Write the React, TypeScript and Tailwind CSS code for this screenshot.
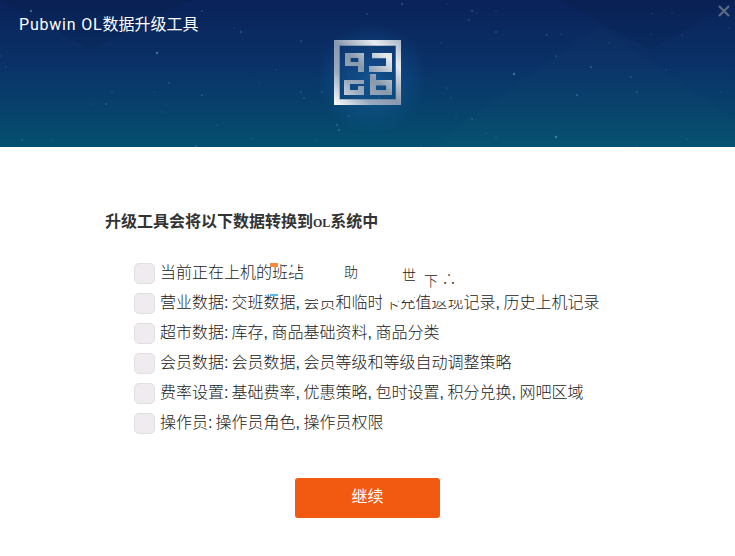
const rows = [
  ['当前正在上机的班结'],
  ['营业数据', '交班数据, 会员和临时卡充值返现记录, 历史上机记录'],
  ['超市数据', '库存, 商品基础资料, 商品分类'],
  ['会员数据', '会员数据, 会员等级和等级自动调整策略'],
  ['费率设置', '基础费率, 优惠策略, 包时设置, 积分兑换, 网吧区域'],
  ['操作员', '操作员角色, 操作员权限'],
];

// white patches and stray bits of text where the first two rows are broken up
const patches = [
  'left-[303px] top-[35px] w-[15px] h-[6px]',
  'left-[318px] top-[35px] w-[16px] h-[8px]',
  'left-[382px] top-[35px] w-[16px] h-[9px]',
  'left-[398px] top-[35px] w-[16px] h-[7px]',
  'left-[430px] top-[35px] w-[16px] h-[8px]',
  'left-[446px] top-[35px] w-[16px] h-[7px]',
  'left-[282px] top-[9px] w-[16px] h-[5px]',
];
const fragments = [
  { text: '助', cls: 'left-[344px] top-[5px]' },
  { text: '世', cls: 'left-[402px] top-[8px]' },
  { text: '下', cls: 'left-[424px] top-[14px]' },
  { text: '∴', cls: 'left-[442px] top-[12px]' },
];

// fixed pseudo random star field
const stars = Array.from({ length: 70 }, (_, i) => ({
  x: (i * i * 37 + i * 191 + 31) % 735,
  y: (i * i * 13 + i * 59 + 11) % 147,
  r: i % 7 === 0 ? 1.2 : 0.7,
  o: i % 3 === 0 ? 0.5 : 0.25,
}));

function Backdrop() {
  return (
    <svg className="absolute inset-0 h-full w-full" viewBox="0 0 735 147" aria-hidden="true">
      <defs>
        <radialGradient id="glow">
          <stop offset="0" stopColor="#1b6ab0" stopOpacity="0.55" />
          <stop offset="1" stopColor="#1b6ab0" stopOpacity="0" />
        </radialGradient>
      </defs>
      <polygon points="430,147 600,25 735,120 735,147" fill="#ffffff" opacity="0.012" />
      <polygon points="560,0 650,50 735,0" fill="#000000" opacity="0.05" />
      <polygon points="0,0 90,50 190,0" fill="#000000" opacity="0.05" />
      <circle cx="372" cy="78" r="55" fill="url(#glow)" />
      {stars.map((s, i) => (
        <circle key={i} cx={s.x} cy={s.y} r={s.r} fill="#6fb6d8" opacity={s.o} />
      ))}
    </svg>
  );
}

function Logo() {
  return (
    <svg width="67" height="65" viewBox="0 0 67 65" className="relative">
      <defs>
        <linearGradient id="metal" x1="0" y1="1" x2="1" y2="0">
          <stop offset="0" stopColor="#ffffff" />
          <stop offset="0.28" stopColor="#9aabbf" />
          <stop offset="0.5" stopColor="#8899ae" />
          <stop offset="0.78" stopColor="#e8ecf0" />
          <stop offset="1" stopColor="#a9b7c6" />
        </linearGradient>
      </defs>
      <path
        fill="url(#metal)"
        fillRule="evenodd"
        d="M0 0H67V65H0Z M5.7 5.7V59.3H61.7V5.7Z
           M11 13H30V32H24V26H11Z M16.7 18V22H24.3V18Z
           M38 13H58V32H35V26H52V18.3H38Z
           M10 40H30V44H16V50H24V46H30V55H10Z
           M36 34H42V40H58V55H36Z M42 45.5V50H52V45.5Z"
      />
    </svg>
  );
}

export default function App() {
  return (
    <div className="h-[556px] w-[735px] overflow-hidden bg-white font-['Liberation_Sans','Noto_Sans_CJK_SC',sans-serif] text-[#333]">
      <header className="relative h-[147px] bg-[linear-gradient(180deg,#0a2259_0%,#0a3268_45%,#04506f_100%)]">
        <Backdrop />
        <h1 className="relative pl-[19px] pt-[13px] font-['Roboto','Noto_Sans_CJK_SC',sans-serif] text-[16px] leading-[24px] font-normal text-white">
          <span className="tracking-[0.8px]">Pubwin OL</span>数据升级工具
        </h1>
        <div className="relative mt-[3px] flex justify-center">
          <Logo />
        </div>
        <svg className="absolute right-[4px] top-[4px]" width="14" height="14" viewBox="0 0 14 14">
          <path d="M2 2L12 12M12 2L2 12" stroke="#5b6b7f" strokeWidth="2.2" />
        </svg>
      </header>

      <main className="pt-[64px]">
        <h2 className="pl-[105px] text-[16px] leading-[22px] font-bold text-[#333]">
          升级工具会将以下数据转换到<span className="font-['Liberation_Serif',serif] text-[12px]">OL</span>系统中
        </h2>
        <div className="relative mt-[24px]">
          <ul className="pl-[134px]">
            {rows.map(([name, detail], i) => (
              <li key={i} className="flex h-[30px] items-center gap-[5px]">
                <span className="h-[21px] w-[21px] shrink-0 rounded-[5px] border border-[#e2dfe2] bg-[#efebef]" />
                <span className="whitespace-nowrap text-[16px] font-light text-[#222] [word-spacing:-0.9px]">
                  {name}
                  {detail && <span className="mr-[3px]">:</span>}
                  {detail}
                </span>
              </li>
            ))}
          </ul>
          {patches.map((cls) => (
            <span key={cls} className={`absolute bg-white ${cls}`} />
          ))}
          {fragments.map((f) => (
            <span key={f.cls} className={`absolute text-[14px] leading-[18px] font-light text-[#222] ${f.cls}`}>
              {f.text}
            </span>
          ))}
          <span className="absolute left-[270px] top-[5px] h-[4px] w-[8px] bg-[#f58a3c]" />
          <span className="absolute left-[270px] top-[36px] h-[2px] w-[8px] bg-[#5cb8e6]" />
        </div>
        <div className="mt-[40px] flex justify-center">
          <button className="h-[40px] w-[145px] rounded-[3px] bg-[#f25a12] pb-[3px] text-[16px] text-white">继续</button>
        </div>
      </main>
    </div>
  );
}
